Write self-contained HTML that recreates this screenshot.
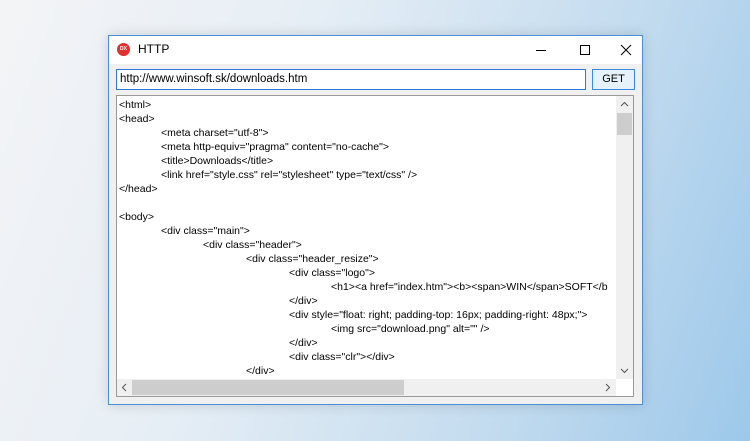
<!DOCTYPE html>
<html><head><style>
*{margin:0;padding:0;box-sizing:border-box}
body{width:750px;height:441px;overflow:hidden;position:relative;font-family:"Liberation Sans",sans-serif;font-size:11px;color:#000;
background:linear-gradient(110deg,#f3f4f6 0%,#e6eef5 35%,#c4dcef 70%,#9dc8ea 100%)}
.win{position:absolute;left:108px;top:35px;width:535px;height:370px;border:1px solid #4a90d9;background:#f0f0f0;box-shadow:0 0 12px rgba(0,0,0,.15)}
.title{position:absolute;left:0;top:0;width:533px;height:28px;background:#fff}
.ico{position:absolute;left:8px;top:7px;width:13px;height:13px;border-radius:50%;background:#e03030;color:#fff;font-size:5px;font-weight:bold;text-align:center;line-height:13px}
.tt{position:absolute;left:29px;top:6px;font-size:12px}
.url{position:absolute;left:7px;top:33px;width:470px;height:21px;background:#fff;border:1px solid #2d7ad6;padding:2px 3px;font-size:11.5px;line-height:15px}
.get{position:absolute;left:483px;top:33px;width:43px;height:21px;background:#e5f1fb;border:1px solid #3c8ade;text-align:center;line-height:19px;font-size:11px}
.memo{position:absolute;left:7px;top:59px;width:518px;height:302px;background:#fff;border:1px solid #999;overflow:hidden}
.l{position:absolute;white-space:pre;font-size:10.5px;line-height:14px}
.vs{position:absolute;right:0;top:0;width:17px;height:283px;background:#f0f0f0}
.hs{position:absolute;left:0;top:283px;width:499px;height:17px;background:#f0f0f0}
.corner{position:absolute;right:0;top:283px;width:17px;height:17px;background:#fff}
</style></head><body>
<div class="win">
<div class="title"><div class="ico">DX</div><div class="tt">HTTP</div>
<svg style="position:absolute;left:425px;top:8px" width="100" height="12"><path d="M2 6.5h10" stroke="#000" stroke-width="1"/><rect x="46.5" y="1.5" width="9" height="9" fill="none" stroke="#000"/><path d="M87 1l10 10M97 1l-10 10" stroke="#000"/></svg>
</div>
<div class="url">http://www.winsoft.sk/downloads.htm</div>
<div class="get">GET</div>
<div class="memo">
<div class="l" style="left:2px;top:2px">&lt;html&gt;</div>
<div class="l" style="left:2px;top:16px">&lt;head&gt;</div>
<div class="l" style="left:44px;top:30px">&lt;meta charset="utf-8"&gt;</div>
<div class="l" style="left:44px;top:44px">&lt;meta http-equiv="pragma" content="no-cache"&gt;</div>
<div class="l" style="left:44px;top:58px">&lt;title&gt;Downloads&lt;/title&gt;</div>
<div class="l" style="left:44px;top:72px">&lt;link href="style.css" rel="stylesheet" type="text/css" /&gt;</div>
<div class="l" style="left:2px;top:86px">&lt;/head&gt;</div>
<div class="l" style="left:2px;top:114px">&lt;body&gt;</div>
<div class="l" style="left:44px;top:128px">&lt;div class="main"&gt;</div>
<div class="l" style="left:86px;top:142px">&lt;div class="header"&gt;</div>
<div class="l" style="left:129px;top:156px">&lt;div class="header_resize"&gt;</div>
<div class="l" style="left:172px;top:170px">&lt;div class="logo"&gt;</div>
<div class="l" style="left:214px;top:184px">&lt;h1&gt;&lt;a href="index.htm"&gt;&lt;b&gt;&lt;span&gt;WIN&lt;/span&gt;SOFT&lt;/b</div>
<div class="l" style="left:172px;top:198px">&lt;/div&gt;</div>
<div class="l" style="left:172px;top:212px">&lt;div style="float: right; padding-top: 16px; padding-right: 48px;"&gt;</div>
<div class="l" style="left:214px;top:226px">&lt;img src="download.png" alt="" /&gt;</div>
<div class="l" style="left:172px;top:240px">&lt;/div&gt;</div>
<div class="l" style="left:172px;top:254px">&lt;div class="clr"&gt;&lt;/div&gt;</div>
<div class="l" style="left:129px;top:268px">&lt;/div&gt;</div>
<div class="vs"><svg width="17" height="283"><path d="M5 10l3.5-3.5L12 10" fill="none" stroke="#555"/><rect x="1" y="17" width="15" height="22" fill="#cdcdcd"/><path d="M5 273l3.5 3.5L12 273" fill="none" stroke="#555"/></svg></div>
<div class="hs"><svg width="499" height="17"><path d="M9 5l-3.5 3.5L9 12" fill="none" stroke="#555"/><rect x="15" y="1" width="272" height="15" fill="#cdcdcd"/><path d="M489 5l3.5 3.5L489 12" fill="none" stroke="#555"/></svg></div>
<div class="corner"></div>
</div>
</div>
</body></html>
